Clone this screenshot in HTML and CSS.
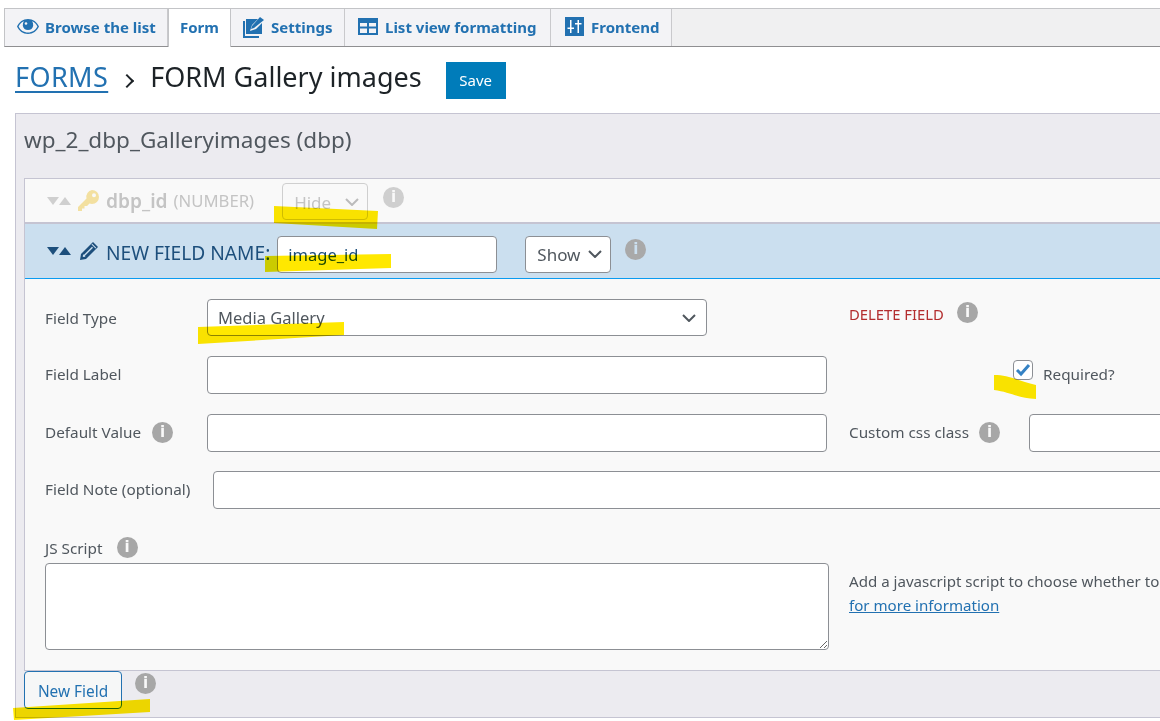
FILE: index.html
```html
<!DOCTYPE html>
<html>
<head>
  <title>Form - Gallery images</title>
  <link rel="stylesheet" href="styles.css">
</head>
<body>
  <div class="page">
    <nav class="tabs">
      <a class="tab tab-browse">
        <svg class="ico" width="22" height="15" viewBox="0 0 22 15"><path fill="#2271b1" fill-rule="evenodd" d="M11 0C6 0 2 3 0 7.500 2 12 6 15 11 15s9-3 11-7.500C20 3 16 0 11 0zM7 2.300A5.200 5.200 0 0 0 5.800 6.800a5.300 5.300 0 0 0 10.400 0A5.200 5.200 0 0 0 15 2.300c2.400.9 4.300 2.700 5.400 5.200-1.700 3.700-5.200 6-9.400 6s-7.700-2.300-9.400-6C2.700 5 4.600 3.200 7 2.300z"/><circle cx="9" cy="4.500" r="1.300" fill="#f3f3f6"/></svg>
        Browse the list
      </a>
      <a class="tab tab-active">Form</a>
      <a class="tab tab-settings">
        <svg class="ico" width="22" height="22" viewBox="0 0 22 22"><path fill="#2271b1" d="M0 5h2v15h14v2H0zM3 3h12l-6 6-2 6 6-2 6-6v11H3z"/><path fill="#2271b1" d="M17 1l4 3-10 8-3 1 1-3z"/></svg>
        Settings
      </a>
      <a class="tab tab-list">
        <svg class="ico" width="20" height="17" viewBox="0 0 20 17"><path fill="#2271b1" fill-rule="evenodd" d="M0 0h20v17H0zM2 5v3.500h7V5zm9 0v3.500h7V5zm-9 5.500V15h7v-4.500zm9 0V15h7v-4.500z"/></svg>
        List view formatting
      </a>
      <a class="tab tab-front">
        <svg class="ico" width="19" height="19" viewBox="0 0 19 19"><path fill="#2271b1" d="M0 0h19v19H0z"/><path fill="#fff" d="M5 3h1.500v7.500H9V12H6.500v4H5v-4H2.500v-1.500H5zM12.500 3H14v3h2.500v1.500H14V16h-1.500V7.500H10V6h2.500z"/></svg>
        Frontend
      </a>
    </nav>

    <div class="title-row">
      <h1 class="title"><a class="crumb">FORMS</a><span class="sep"></span>FORM Gallery images</h1>
      <button class="save">Save</button>
    </div>

    <section class="panel">
      <h2 class="panel-title">wp_2_dbp_Galleryimages (dbp)</h2>
      <div class="fields">
        <div class="row-head row-muted">
          <span class="sort"><i class="down"></i><i class="up"></i></span>
          <svg class="head-ico" width="24" height="24" viewBox="0 0 24 24"><path fill="#f3e0a0" fill-rule="evenodd" d="M16 1a7 7 0 0 1 0 14c-.9 0-1.700-.2-2.500-.5L11 17H8.500v2.500H6V22H2v-4l8.500-8.500A7 7 0 0 1 16 1zm2 3.200a2 2 0 1 0 0 4 2 2 0 0 0 0-4z"/></svg>
          <b class="muted-name">dbp_id</b>
          <span class="muted-type">(NUMBER)</span>
          <span class="sel sel-hide">Hide<svg class="chev" width="14" height="8" viewBox="0 0 14 8"><path d="M1 1l6 6 6-6" fill="none" stroke="#bbb" stroke-width="2"/></svg></span>
          <i class="info info-muted">i</i>
        </div>
        <div class="row-head row-edit">
          <span class="sort sort-dark"><i class="down"></i><i class="up"></i></span>
          <svg class="head-ico" width="18" height="18" viewBox="0 0 18 18"><path fill="#1d4f7c" d="M13 0l5 5L6 17l-6 1 1-6z"/><path fill="#cbdfef" d="M3 12.500l1 .3 8-8 1 1-8 8 .3 1-2.500.3zM11.500 2.500l4 4 .7-.7-4-4z"/></svg>
          <label class="name-label">NEW FIELD NAME:</label>
          <span class="box name-box">image_id</span>
          <span class="sel sel-show">Show<svg class="chev" width="14" height="8" viewBox="0 0 14 8"><path d="M1 1l6 6 6-6" fill="none" stroke="#50575e" stroke-width="2"/></svg></span>
          <i class="info">i</i>
        </div>
        <div class="field-body">
          <div class="line line-type">
            <label class="lbl">Field Type</label>
            <span class="box type-box">Media Gallery<svg class="chev" width="14" height="8" viewBox="0 0 14 8"><path d="M1 1l6 6 6-6" fill="none" stroke="#50575e" stroke-width="2"/></svg></span>
            <a class="delete">DELETE FIELD</a>
            <i class="info">i</i>
          </div>
          <div class="line line-label">
            <label class="lbl">Field Label</label>
            <span class="box wide-box"></span>
            <span class="check"><svg width="16" height="14" viewBox="0 0 16 14"><path d="M2 7l4 4 8-9" fill="none" stroke="#3582c4" stroke-width="3"/></svg></span>
            <label class="lbl">Required?</label>
          </div>
          <div class="line line-default">
            <label class="lbl lbl-default">Default Value<i class="info">i</i></label>
            <span class="box wide-box"></span>
            <label class="lbl lbl-css">Custom css class<i class="info">i</i></label>
            <span class="box css-box"></span>
          </div>
          <div class="line line-note">
            <label class="lbl">Field Note (optional)</label>
            <span class="box note-box"></span>
          </div>
          <label class="lbl lbl-js">JS Script<i class="info">i</i></label>
          <div class="line line-js">
            <textarea class="js-area"></textarea>
            <p class="help">Add a javascript script to choose whether to<br><a>for more information</a></p>
          </div>
        </div>
      </div>
      <div class="panel-foot">
        <button class="new-field">New Field</button>
        <i class="info">i</i>
      </div>
    </section>

    <svg class="marks" width="1160" height="721" viewBox="0 0 1160 721">
      <path d="M274 206l104 5-1 18-103-6zM265 256l126-2v14l-126 4zM198 327l146-5v13l-146 9zM994 375c14 0 22 5 42 10v14c-18-1-26-7-42-9zM13 708l137-9v13L14 720z"/>
    </svg>
  </div>
</body>
</html>
```

FILE: styles.css
```css
html, body {
  margin: 0;
  height: 721px;
  overflow: hidden;
  background: #fff;
}
body {
  font-family: "Noto Sans", sans-serif;
  font-size: 15.4px;
  color: #50575e;
}
.page {
  position: relative;
  width: 1160px;
  height: 721px;
  overflow: hidden;
  padding: 8px 0 0 4px;
  box-sizing: border-box;
}
.tabs {
  display: flex;
  height: 39px;
  box-sizing: border-box;
  background: #f0f0f1;
  border-top: 1px solid #c3c4c7;
  border-left: 1px solid #c3c4c7;
  border-bottom: 1px solid #8f8f91;
}
.tab {
  display: flex;
  align-items: center;
  gap: 6px;
  box-sizing: border-box;
  height: 37px;
  padding-left: 12px;
  padding-bottom: 2px;
  background: #f3f3f6;
  border-right: 1px solid #c9c9cc;
  color: #2271b1;
  font-weight: 700;
  font-size: 15px;
}
.tab-browse { width: 163px; gap: 6px; }
.tab-active {
  width: 63px;
  height: 38px;
  padding-left: 11px;
  padding-bottom: 3px;
  background: #fff;
  border-left: 1px solid #c3c4c7;
  border-right: 1px solid #c3c4c7;
}
.tab-settings { width: 114px; padding-left: 12px; }
.tab-list { width: 206px; padding-left: 13px; gap: 7px; }
.tab-front { width: 121px; padding-left: 14px; gap: 7px; }

.title-row {
  display: flex;
  align-items: center;
  height: 66px;
  padding-left: 11px;
}
.title {
  margin: -8px 0 0;
  font-size: 27px;
  font-weight: 400;
  color: #1d2327;
  display: flex;
  align-items: center;
}
.crumb {
  color: #2271b1;
  letter-spacing: .4px;
  text-decoration: underline;
  text-underline-offset: 4px;
}
.sep {
  width: 8px;
  height: 8px;
  margin: 10px 18px 0 14px;
  border-top: 2.500px solid #1d2327;
  border-right: 2.500px solid #1d2327;
  transform: rotate(45deg);
}
.save {
  width: 60px;
  height: 37px;
  margin-left: 24px;
  border: 0;
  background: #007cba;
  color: #fff;
  font-family: inherit;
  font-size: 15px;
}

.panel {
  width: 1160px;
  height: 605px;
  margin-left: 11px;
  box-sizing: border-box;
  background: #ecebf0;
  border: 1px solid #c5c4d2;
  padding-left: 8px;
}
.panel-title {
  margin: 0;
  height: 64px;
  line-height: 52px;
  font-size: 22.500px;
  font-weight: 400;
  color: #50575e;
}
.fields {
  border: 1px solid #c5c4d2;
  border-right: 0;
  height: 493px;
  box-sizing: border-box;
  background: #f9f9f9;
}
.row-head {
  display: flex;
  align-items: center;
  padding-left: 22px;
  box-sizing: border-box;
}
.row-muted {
  height: 45px;
  border-bottom: 2px solid #c5c4d2;
  color: #c4c4c4;
}
.row-edit {
  height: 55px;
  background: #cbdfef;
  border-bottom: 1px solid #0a9bf0;
  color: #1d4f7c;
}
.sort {
  display: flex;
  gap: 0;
  width: 30px;
}
.sort i {
  width: 0;
  height: 0;
  border-left: 6px solid transparent;
  border-right: 6px solid transparent;
}
.sort .down { border-top: 8px solid #cfcfcf; }
.sort .up { border-bottom: 8px solid #cfcfcf; }
.sort-dark .down { border-top-color: #1d4f7c; }
.sort-dark .up { border-bottom-color: #1d4f7c; }
.head-ico { flex: none; }
.row-muted .head-ico { margin: 0 6px 0 -1px; }
.row-edit .head-ico { margin: 0 8px 0 3px; }
.muted-name {
  font-size: 19.200px;
  font-weight: 600;
  margin-right: 6px;
}
.muted-type { font-size: 16.700px; }
.sel {
  display: flex;
  align-items: center;
  justify-content: space-between;
  box-sizing: border-box;
  height: 37px;
  padding: 0 8px 0 11px;
  border: 1px solid #8c8f94;
  border-radius: 4px;
  font-size: 17px;
}
.sel-hide {
  width: 86px;
  margin: 1px 15px 0 28px;
  color: #c4c4c4;
  border-color: #cfcfcf;
  padding-top: 2px;
}
.sel-show {
  width: 86px;
  margin: 6px 14px 0 28px;
  background: #fff;
  color: #50575e;
}
.name-label {
  font-size: 19.200px;
  margin: 2px 7px 0 0;
  white-space: nowrap;
}
.box {
  display: flex;
  align-items: center;
  justify-content: space-between;
  box-sizing: border-box;
  height: 38px;
  padding: 0 10px;
  background: #fff;
  border: 1px solid #8c8f94;
  border-radius: 4px;
  font-size: 16.500px;
  flex: none;
}
.name-box { width: 220px; height: 37px; margin-top: 6px; }
.info {
  display: inline-block;
  flex: none;
  width: 21px;
  height: 21px;
  line-height: 21px;
  border-radius: 50%;
  background: #a7a7a7;
  color: #f9f9f9;
  font-family: "DejaVu Sans", sans-serif;
  font-style: normal;
  font-weight: 700;
  font-size: 15px;
  text-align: center;
}
.info-muted {
  background: #cfcfcf;
  margin-top: -6px;
}
.row-edit .info {
  margin-top: -4px;
  background: #a9a9a9;
  color: #cbdfef;
}
.field-body {
  padding: 20px 0 0 20px;
}
.line {
  display: flex;
  align-items: center;
}
.lbl {
  display: flex;
  align-items: center;
  font-size: 15.300px;
  white-space: nowrap;
  margin-top: -2px;
}
.line > .lbl:first-child { width: 162px; flex: none; }
.line-type { height: 37px; }
.line-type > .lbl:first-child { margin-top: 0; }
.line-type .type-box { width: 500px; height: 37px; }
.delete {
  margin: -7px 0 0 142px;
  width: 100px;
  color: #b32d2e;
  font-size: 14.800px;
  white-space: nowrap;
}
.line-type .info { margin: -11px 0 0 8px; }
.line-label { height: 38px; margin-top: 20px; }
.wide-box { width: 620px; }
.check {
  display: flex;
  align-items: center;
  justify-content: center;
  box-sizing: border-box;
  width: 20px;
  height: 20px;
  margin: -10px 10px 0 186px;
  background: #fff;
  border: 1px solid #8c8f94;
  border-radius: 4px;
}
.line-default { height: 38px; margin-top: 20px; }
.lbl-default .info { margin-left: 11px; }
.lbl-css { margin-left: 22px; }
.lbl-css .info { margin-left: 10px; }
.css-box { width: 200px; margin-left: 29px; }
.line-note { height: 38px; margin-top: 19px; }
.line-note > .lbl:first-child { width: 168px; }
.note-box { width: 1000px; }
.lbl-js { margin-top: 28px; height: 21px; }
.lbl-js .info { margin: 0 0 0 14px; }
.line-js {
  align-items: flex-start;
  margin-top: 5px;
}
.js-area {
  width: 784px;
  height: 87px;
  margin: 0;
  box-sizing: border-box;
  background: #fff;
  border: 1px solid #8c8f94;
  border-radius: 4px;
  flex: none;
}
.help {
  margin: 6px 0 0 20px;
  font-size: 15.100px;
  line-height: 24px;
  white-space: nowrap;
}
.help a {
  color: #2271b1;
  text-decoration: underline;
}
.panel-foot {
  display: flex;
  align-items: flex-start;
  gap: 13px;
}
.new-field {
  width: 98px;
  height: 38px;
  background: #f6f7f7;
  border: 1px solid #2271b1;
  border-radius: 4px;
  color: #2271b1;
  font: inherit;
  padding: 2px 0 0;
}
.panel-foot .info { margin-top: 2px; }
.marks {
  position: absolute;
  left: 0;
  top: 0;
  mix-blend-mode: multiply;
  pointer-events: none;
}
.marks path { fill: #ffe800; }
```
